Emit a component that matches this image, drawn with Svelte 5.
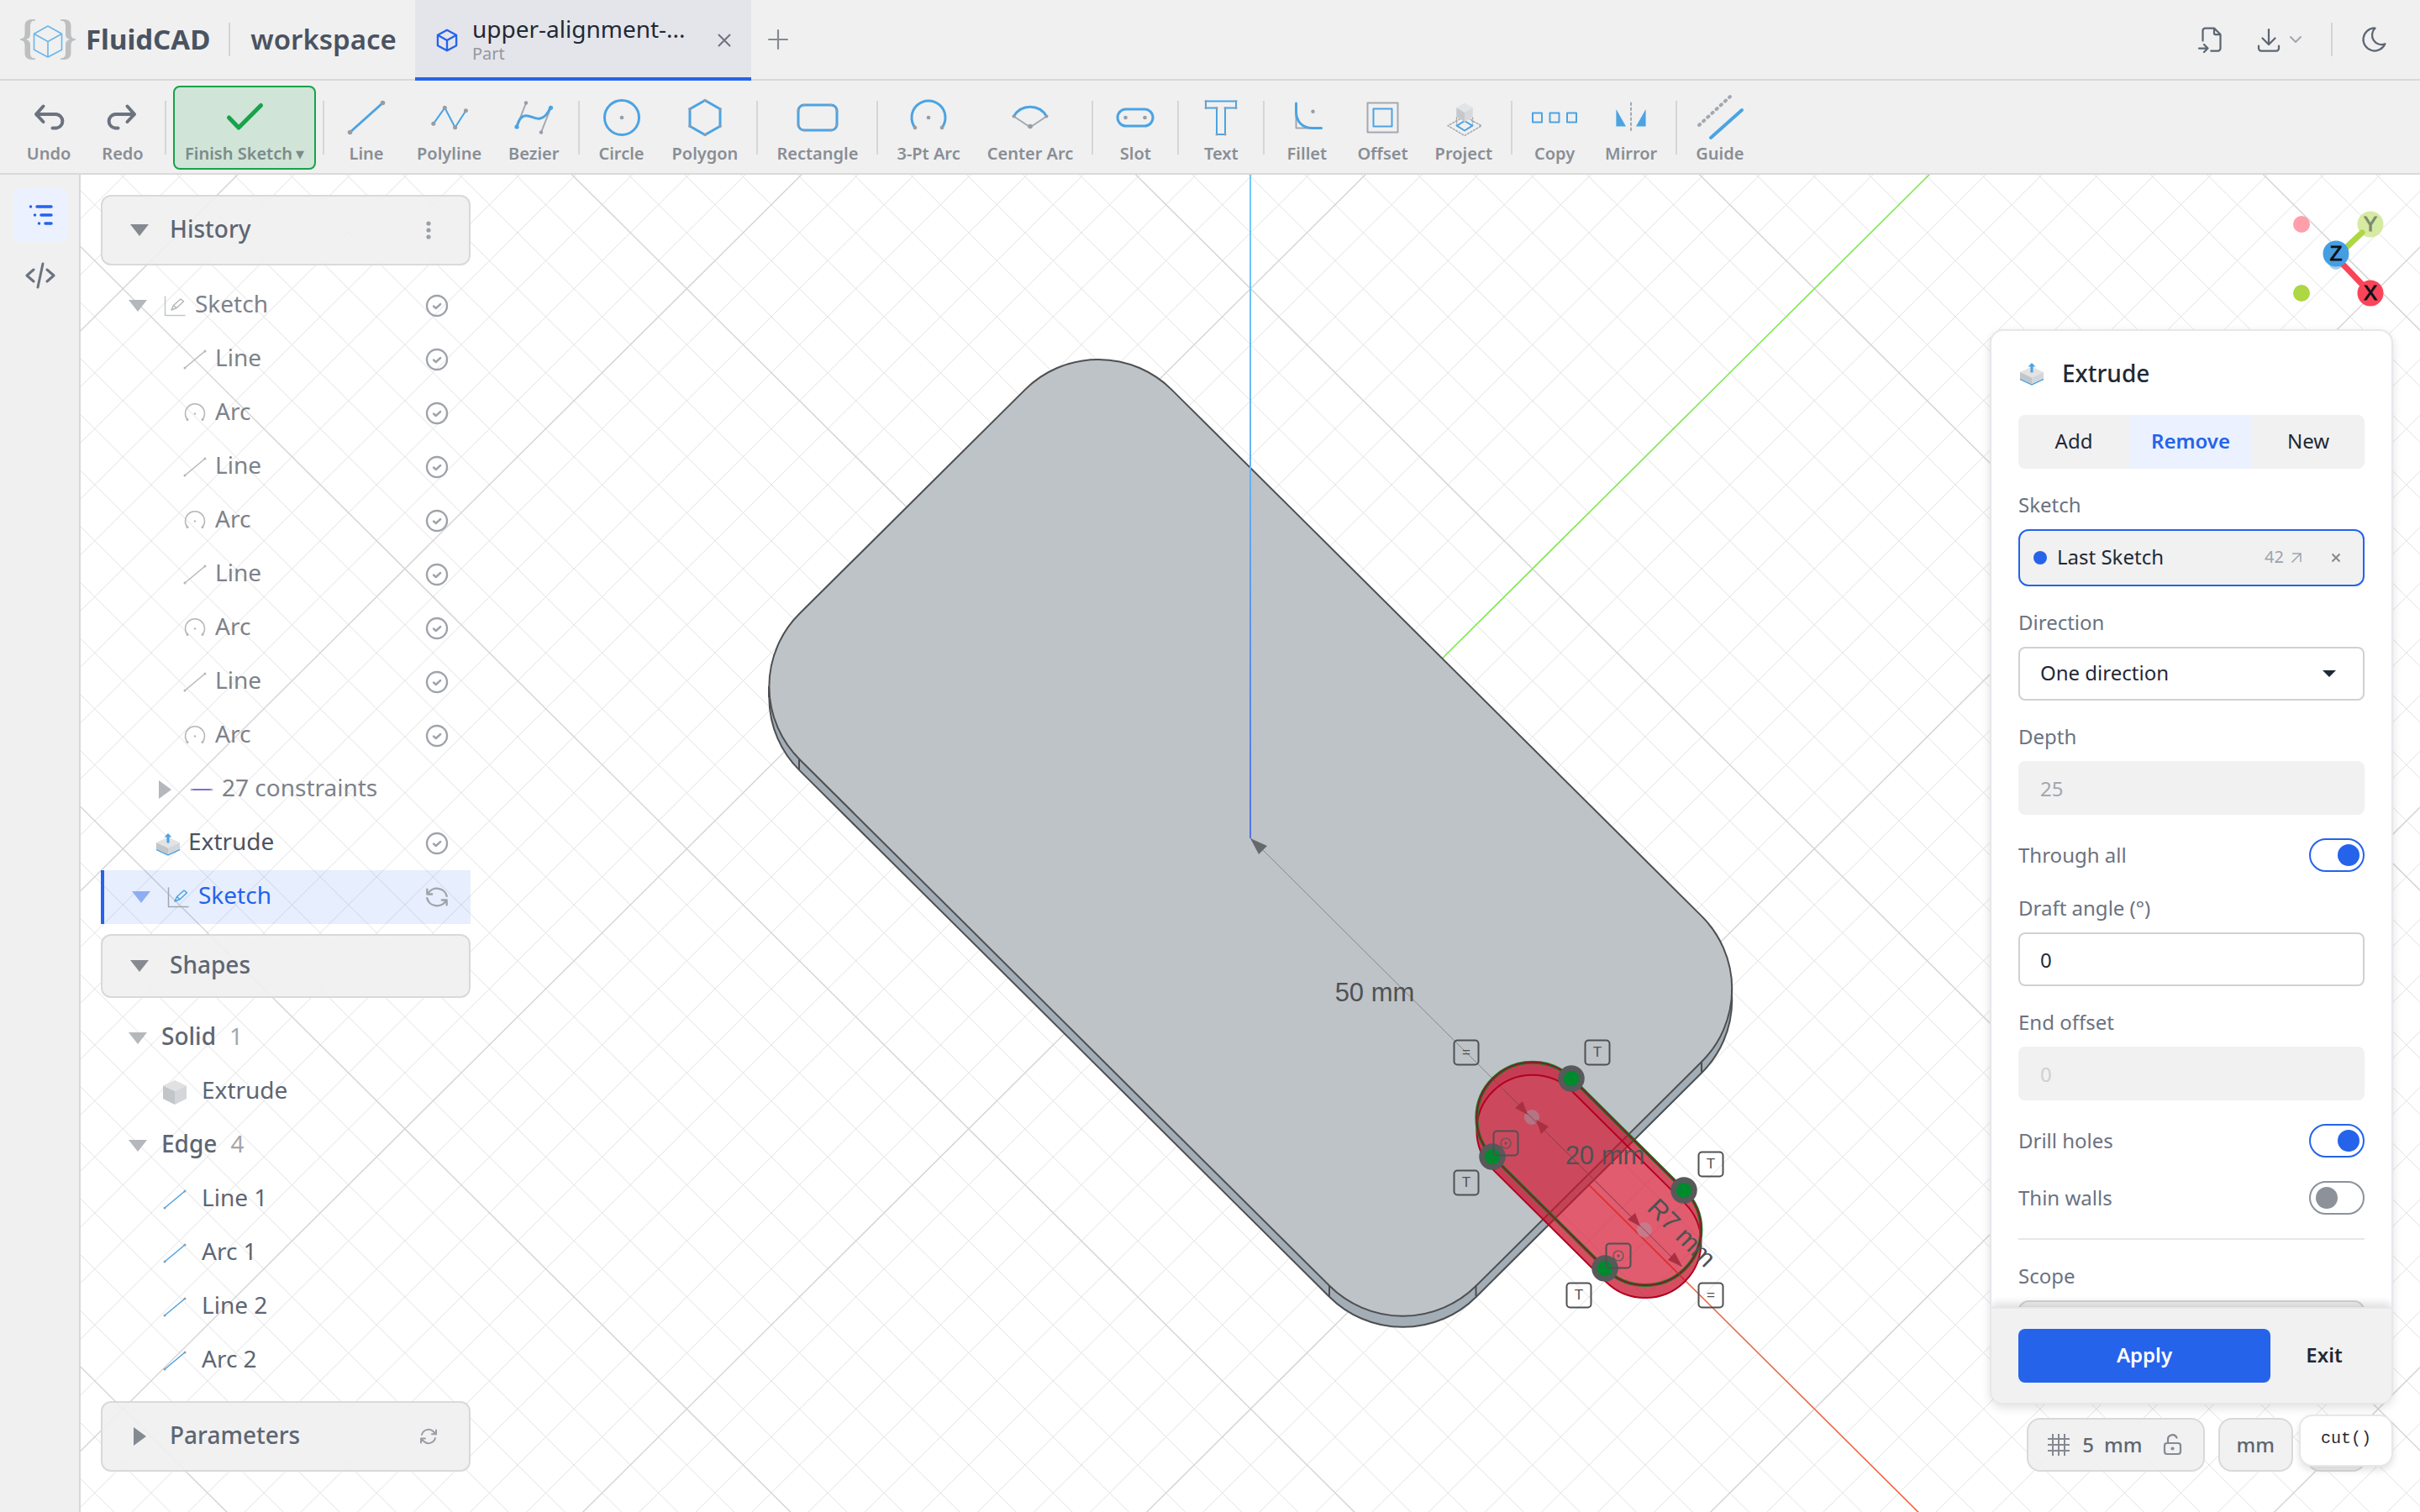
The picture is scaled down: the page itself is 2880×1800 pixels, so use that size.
<script>
  let direction = $state('one');
  let draftAngle = $state('0');
  let throughAll = $state(true);
  let drillHoles = $state(true);
  let thinWalls = $state(false);
  let operation = $state('Remove');

  const operations = ['Add', 'Remove', 'New'];

  const tools = [
    [
      { id: 'undo', label: 'Undo' },
      { id: 'redo', label: 'Redo' }
    ],
    [{ id: 'finish', label: 'Finish Sketch' }],
    [
      { id: 'line', label: 'Line' },
      { id: 'polyline', label: 'Polyline' },
      { id: 'bezier', label: 'Bezier' }
    ],
    [
      { id: 'circle', label: 'Circle' },
      { id: 'polygon', label: 'Polygon' }
    ],
    [{ id: 'rect', label: 'Rectangle' }],
    [
      { id: 'arc3', label: '3-Pt Arc' },
      { id: 'arcc', label: 'Center Arc' }
    ],
    [{ id: 'slot', label: 'Slot' }],
    [{ id: 'text', label: 'Text' }],
    [
      { id: 'fillet', label: 'Fillet' },
      { id: 'offset', label: 'Offset' },
      { id: 'project', label: 'Project' }
    ],
    [
      { id: 'copy', label: 'Copy' },
      { id: 'mirror', label: 'Mirror' }
    ],
    [{ id: 'guide', label: 'Guide' }]
  ];

  const history = [
    { label: 'Sketch', icon: 'sketch', kind: 'root muted', open: true, status: 'ok' },
    { label: 'Line', icon: 'line', kind: 'child muted', status: 'ok' },
    { label: 'Arc', icon: 'arc', kind: 'child muted', status: 'ok' },
    { label: 'Line', icon: 'line', kind: 'child muted', status: 'ok' },
    { label: 'Arc', icon: 'arc', kind: 'child muted', status: 'ok' },
    { label: 'Line', icon: 'line', kind: 'child muted', status: 'ok' },
    { label: 'Arc', icon: 'arc', kind: 'child muted', status: 'ok' },
    { label: 'Line', icon: 'line', kind: 'child muted', status: 'ok' },
    { label: 'Arc', icon: 'arc', kind: 'child muted', status: 'ok' },
    { label: '27 constraints', icon: 'constraint', kind: 'nested muted', open: false },
    { label: 'Extrude', icon: 'extrude', kind: 'nested', status: 'ok' },
    { label: 'Sketch', icon: 'sketch', kind: 'root selected', open: true, status: 'busy' }
  ];

  const shapes = [
    { label: 'Solid', count: 1, items: [{ label: 'Extrude', icon: 'cube' }] },
    {
      label: 'Edge',
      count: 4,
      items: [
        { label: 'Line 1', icon: 'line' },
        { label: 'Arc 1', icon: 'line' },
        { label: 'Line 2', icon: 'line' },
        { label: 'Arc 2', icon: 'line' }
      ]
    }
  ];

  // grid lines every 5 mm, a stronger one every 50 mm
  const gridSteps = Array.from({ length: 101 }, (_, i) => (i - 50) * 5);
  const minor = gridSteps.filter((v) => v % 50 !== 0);
  const major = gridSteps.filter((v) => v % 50 === 0);
  const toPath = (list) => list.map((v) => `M${v} -300V300M-300 ${v}H300`).join('');

  const slotTop = 'M50 7H70A7 7 0 0 0 70 -7H50A7 7 0 0 0 50 7Z';
  const slotBase = 'M51.125 5.875H71.125A7 7 0 0 0 71.125 -8.125H51.125A7 7 0 0 0 51.125 5.875Z';

  const points = [
    [1870, 1284],
    [1776, 1377],
    [2004, 1417],
    [1910, 1510]
  ];

  const badges = [
    { x: 1745, y: 1253, mark: '=' },
    { x: 1901, y: 1253, mark: 'T' },
    { x: 1792, y: 1361, mark: 'o' },
    { x: 2036, y: 1386, mark: 'T' },
    { x: 1745, y: 1408, mark: 'T' },
    { x: 1926, y: 1495, mark: 'o' },
    { x: 1879, y: 1542, mark: 'T' },
    { x: 2036, y: 1542, mark: '=' }
  ];
</script>

{#snippet cubeOutline(cls)}
  <svg class={cls} viewBox="0 0 24 24" fill="none" stroke="currentColor" stroke-width="2" stroke-linejoin="round">
    <path d="M12 1.5l9.5 5.2v10.6L12 22.5l-9.5-5.2V6.7zM2.5 6.7L12 12l9.5-5.3M12 12v10.5" />
  </svg>
{/snippet}

{#snippet caret(open)}
  <svg class="caret" viewBox="0 0 24 24" fill="currentColor">
    {#if open}
      <path d="M1 5h22L12 19z" />
    {:else}
      <path d="M5 1v22L20 12z" />
    {/if}
  </svg>
{/snippet}

{#snippet toolIcon(id)}
  <svg class="tool-icon" viewBox="0 0 48 48" fill="none" stroke-linecap="round" stroke-linejoin="round">
    {#if id === 'undo'}
      <path class="ink" d="M17.5 10.5L9 20l8.500 9M9 20h24a8.300 8.300 0 0 1 0 16.500h-4.500" />
    {:else if id === 'redo'}
      <path class="ink" d="M29.500 10.500L38 20l-8.500 9M38 20H15a8.300 8.300 0 0 0 0 16.500h3.500" />
    {:else if id === 'finish'}
      <path class="tick" d="M5.500 24L17 36 43.500 9.500" />
    {:else if id === 'line'}
      <path class="blue" d="M4.500 41.500l39-35" />
      <circle class="dot" cx="4.500" cy="41.500" r="2.800" /><circle class="dot" cx="43.500" cy="6.500" r="2.800" />
    {:else if id === 'polyline'}
      <path class="blue thin" d="M4.800 31.300l13.500-19 12.300 23.400 12.800-20" />
      <circle class="dot" cx="4.800" cy="31.300" r="2.500" /><circle class="dot" cx="18.300" cy="12.300" r="2.500" />
      <circle class="dot" cx="30.600" cy="35.700" r="2.500" /><circle class="dot" cx="43.400" cy="15.700" r="2.500" />
    {:else if id === 'bezier'}
      <path class="grey" d="M4 35L15 6.500M44.500 12.300L33 41.500" />
      <path class="blue" d="M4 35C7 25 10 21 17 22s9 4 15 3 9-6 12-13" />
      <circle class="dot" cx="15" cy="6.500" r="2.200" /><circle class="dot" cx="33" cy="41.500" r="2.200" />
      <circle class="bdot" cx="4" cy="35" r="2.600" /><circle class="bdot" cx="44.500" cy="12.300" r="2.600" />
    {:else if id === 'circle'}
      <circle class="blue" cx="24" cy="24" r="20.500" /><circle class="dot" cx="24" cy="24" r="2.300" />
    {:else if id === 'polygon'}
      <path class="blue" d="M24 3.500l18 10.200v20.600L24 44.500 6 34.300V13.700z" />
      {#each [[24, 3.5], [42, 13.7], [42, 34.3], [24, 44.5], [6, 34.3], [6, 13.7]] as [x, y]}
        <circle class="dot" cx={x} cy={y} r="1.800" />
      {/each}
    {:else if id === 'rect'}
      <rect class="blue" x="1" y="9" width="46" height="30" rx="7" />
      {#each [[8, 9], [40, 9], [47, 16], [47, 32], [40, 39], [8, 39], [1, 32], [1, 16]] as [x, y]}
        <circle class="dot" cx={x} cy={y} r="1.600" />
      {/each}
    {:else if id === 'arc3'}
      <path class="blue" d="M8 36a20 20 0 1 1 32 0" />
      <circle class="dot" cx="8" cy="36" r="2.300" /><circle class="dot" cx="40" cy="36" r="2.300" />
      <circle class="dot" cx="24" cy="24" r="2.300" />
    {:else if id === 'arcc'}
      <path class="grey" d="M4.500 22.500l19.500 13 19.500-13" />
      <path class="blue" d="M4.500 22.500a22.500 22.500 0 0 1 39 0" />
      <circle class="dot" cx="4.500" cy="22.500" r="2" /><circle class="dot" cx="43.500" cy="22.500" r="2" />
      <circle class="dot" cx="24" cy="34.500" r="2.800" />
    {:else if id === 'slot'}
      <rect class="blue" x="3" y="14" width="42" height="20" rx="10" />
      <circle class="dot" cx="12.500" cy="24" r="2.300" /><circle class="dot" cx="35.500" cy="24" r="2.300" />
    {:else if id === 'text'}
      <path class="blue thin" d="M6 4.500h36v8H29v31.500H19V12.500H6z" />
      {#each [[6, 4.5], [42, 4.5], [42, 12.5], [29, 12.5], [29, 44], [19, 44], [19, 12.5], [6, 12.5]] as [x, y]}
        <circle class="dot" cx={x} cy={y} r="1.500" />
      {/each}
    {:else if id === 'fillet'}
      <path class="grey" d="M11.500 16v20.500H30" />
      <path class="blue" d="M11.500 7v10c0 12 8 19.500 19 19.500h11" />
      <circle class="dot" cx="31.500" cy="16.700" r="2.200" />
    {:else if id === 'offset'}
      <rect class="grey" x="6.500" y="6.500" width="36" height="35" />
      <rect class="blue thin" x="13.500" y="13.500" width="22" height="21" />
    {:else if id === 'project'}
      <path class="grey fine" stroke-dasharray="2 2" d="M25 22.500l20 11.200-20 11.800L5 33.700zM15.500 24v9.500M34.500 24v9.500" />
      <path class="blue thin" d="M25 28l9.300 5.700-9.300 5.800-9.300-5.800z" />
      <path fill="#e3e4e5" d="M25 6.500l9.800 5.500-9.800 6-9.800-6z" />
      <path fill="#c6c9cc" d="M15.200 12l9.800 6v11l-9.800-6z" />
      <path fill="#d7d9dc" d="M34.800 12L25 18v11l9.800-6z" />
    {:else if id === 'copy'}
      <path class="blue thin" d="M-2 18.500H9v11H-2zM18.500 18.500h11v11h-11zM39 18.500h11v11H39z" />
    {:else if id === 'mirror'}
      <path class="grey" stroke-dasharray="2.500 3.500" d="M24 6.500v36" />
      <path fill="#4ba3e3" d="M6.400 14v20.500H18zM41.600 14v20.500H30z" />
    {:else if id === 'guide'}
      <path class="grey wide" stroke-dasharray="1.500 5.500" d="M-1 33L36-1" />
      <path class="blue wide" d="M13 48l37-33" />
    {/if}
  </svg>
{/snippet}

{#snippet treeIcon(id)}
  <svg class="tree-icon" viewBox="0 0 32 32" fill="none" stroke-linecap="round" stroke-linejoin="round">
    {#if id === 'sketch'}
      <path class="grey fine" d="M4.500 5v22.500H28" />
      <path class="blue fine" d="M12 21l2.500-5.500L23 8l3.500 2.800-8.500 8zM14.500 15.500l3.500 3.300M12 21l2-1" />
    {:else if id === 'line'}
      <path class="blue fine" d="M4 26L28 6" />
      <circle class="dot" cx="4" cy="26" r="1.500" /><circle class="dot" cx="28" cy="6" r="1.500" />
    {:else if id === 'arc'}
      <path class="blue fine" d="M7 23.500a11.500 11.500 0 1 1 18 0" />
      <circle class="dot" cx="7" cy="23.500" r="1.500" /><circle class="dot" cx="25" cy="23.500" r="1.500" />
      <circle class="dot" cx="16" cy="16.500" r="1.200" />
    {:else if id === 'constraint'}
      <path stroke="#7c6fd0" stroke-width="2" d="M4 16h24" />
      <circle class="dot" cx="4" cy="16" r="1.500" /><circle class="dot" cx="28" cy="16" r="1.500" />
    {:else if id === 'cube'}
      <path fill="#e0e1e2" d="M16 2l14 6.500L16 15 2 8.500z" />
      <path fill="#c3c6c9" d="M2 8.500L16 15v16L2 24z" />
      <path fill="#d4d6d9" d="M30 8.500L16 15v16l14-7z" />
    {:else if id === 'extrude'}
      <path fill="#4ba3e3" d="M2 22.500l14 6.500 14-6.500v1.800l-14 6.500-14-6.500z" />
      <path fill="#e2e3e4" d="M16 8.500l14 6.500-14 6.500L2 15z" />
      <path fill="#c3c6c9" d="M2 15l14 6.500V29L2 22.500z" />
      <path fill="#d4d6d9" d="M30 15l-14 6.500V29l14-6.500z" />
      <path fill="#4ba3e3" d="M16 4l4.500 4.500h-3v7h-3v-7h-3z" />
    {/if}
  </svg>
{/snippet}

<div class="app">
  <header class="topbar">
    <div class="brand">
      <svg class="logo" viewBox="0 0 66 48" fill="none">
        <path fill="#bdbfc1" d="M18 0h-3C8.500 0 5.500 2.500 5.500 8v9c0 4-1.500 5.800-5.500 6.300v1.400C4 25.200 5.500 27 5.500 31v9c0 5.500 3 8 9.500 8h3v-1.500c-4.500-.3-6-2.300-6-7V31c0-4-1.500-6-5-7 3.500-1 5-3 5-7V8.500c0-4.700 1.500-6.700 6-7zM48 0h3c6.500 0 9.500 2.500 9.500 8v9c0 4 1.500 5.800 5.500 6.300v1.400c-4 .5-5.500 2.300-5.500 6.300v9c0 5.500-3 8-9.500 8h-3v-1.500c4.500-.3 6-2.300 6-7V31c0-4 1.500-6 5-7-3.500-1-5-3-5-7V8.500c0-4.700-1.500-6.700-6-7z" />
        <path stroke="#6cb6e9" stroke-width="1.600" stroke-linejoin="round" d="M33 8l16.500 9.300v19L33 45l-16.500-8.700v-19zM16.500 17.300L33 26.500l16.500-9.200M33 26.500V45" />
      </svg>
      <span class="name">FluidCAD</span>
      <span class="rule"></span>
      <span class="space">workspace</span>
    </div>
    <div class="tab">
      {@render cubeOutline('tab-cube')}
      <div class="tab-text">
        <span class="tab-title">upper-alignment-...</span>
        <span class="tab-kind">Part</span>
      </div>
      <button class="bare" aria-label="Close tab">
        <svg class="tiny" viewBox="0 0 16 16" stroke="currentColor" stroke-width="2" stroke-linecap="round"><path d="M1.500 1.500l13 13M14.500 1.500l-13 13" /></svg>
      </button>
    </div>
    <button class="bare add-tab" aria-label="New tab">
      <svg viewBox="0 0 22 22" stroke="currentColor" stroke-width="2" stroke-linecap="round"><path d="M11 1v20M1 11h20" /></svg>
    </button>
    <div class="actions">
      <button class="bare" aria-label="Import">
        <svg class="tabler" viewBox="0 0 24 24"><path d="M14 3v4a1 1 0 0 0 1 1h4M5 13V5a2 2 0 0 1 2-2h7l5 5v11a2 2 0 0 1-2 2h-5.500M2 19h7m-3-3l3 3-3 3" /></svg>
      </button>
      <button class="bare export" aria-label="Export">
        <svg class="tabler" viewBox="0 0 24 24"><path d="M4 17v2a2 2 0 0 0 2 2h12a2 2 0 0 0 2-2v-2M7 11l5 5 5-5M12 4v12" /></svg>
        <svg class="chev" viewBox="0 0 20 20"><path d="M4 7l6 6 6-6" /></svg>
      </button>
      <span class="rule"></span>
      <button class="bare" aria-label="Dark mode">
        <svg class="tabler" viewBox="0 0 24 24"><path d="M12 3h.393a7.500 7.500 0 0 0 7.920 12.446A9 9 0 1 1 12 2.992z" /></svg>
      </button>
    </div>
  </header>

  <nav class="toolbar" aria-label="Sketch tools">
    {#each tools as group, i}
      {#if i > 0}<span class="sep"></span>{/if}
      {#each group as tool}
        <button class="tool" class:finish={tool.id === 'finish'}>
          {@render toolIcon(tool.id)}
          <span>{tool.label}{#if tool.id === 'finish'}<small>▼</small>{/if}</span>
        </button>
      {/each}
    {/each}
  </nav>

  <div class="body">
    <aside class="rail">
      <button class="rail-btn active" aria-label="Tree">
        <svg viewBox="0 0 32 32" stroke="currentColor" stroke-width="3.500" stroke-linecap="round"><path d="M4.500 6h.01M12 6h17M9.500 16h.01M17 16h12M14.500 26h.01M22 26h7" /></svg>
      </button>
      <button class="rail-btn" aria-label="Code">
        <svg class="code" viewBox="0 0 36 36" fill="none" stroke="currentColor" stroke-width="3" stroke-linecap="round" stroke-linejoin="round"><path d="M10 11l-8 7 8 7M26 11l8 7-8 7M21 4l-6 28" /></svg>
      </button>
    </aside>

    <main class="stage">
      <svg class="scene" viewBox="96 208 2784 1592" preserveAspectRatio="xMidYMid slice" fill="none">
        <defs>
          <linearGradient id="zaxis" gradientUnits="userSpaceOnUse" x1="0" y1="208" x2="0" y2="997">
            <stop offset="0" stop-color="#70cbfb" />
            <stop offset="0.430" stop-color="#66b4f4" />
            <stop offset="0.600" stop-color="#5f9cec" />
            <stop offset="1" stop-color="#4f74ea" />
          </linearGradient>
        </defs>

        <g transform="matrix(6.71 6.668 6.71 -6.668 1488.300 1010.500)">
          <path class="grid-minor" d={toPath(minor)} />
          <path class="grid-major" d={toPath(major)} />
          <path class="axis" stroke="#f2643c" d="M0 0H300" />
          <path class="axis" stroke="#7cee4f" d="M0 0V300" />
        </g>

        <!-- plate, 120 x 66 mm with 13 mm corners -->
        <g transform="matrix(6.71 6.668 6.71 -6.668 1488.300 1010.500)">
          <rect class="side edge" x="-60" y="-33" width="120" height="66" rx="13" />
        </g>
        <path class="side" d="M915 817L2061 1177v13L915 830z" />
        <g transform="matrix(6.71 6.668 6.71 -6.668 1488.300 997.300)">
          <rect class="face edge" x="-60" y="-33" width="120" height="66" rx="13" />
        </g>
        <path stroke="#4d4f51" stroke-width="2" d="M951 904v13M1582 1530v13M1756.500 1530v13M2025 1264v13M915 817v13M2061 1177v13" />
        <path stroke="url(#zaxis)" stroke-width="2" d="M1488 208V998" />

        <path stroke="#85898c" stroke-width="1" d="M1489 998L2001 1508" />
        <path fill="#66696c" d="M1488 998l20 9-10 10z" />

        <g transform="matrix(6.71 6.668 6.71 -6.668 1488.300 997.300)">
          <path fill="#d2132d" fill-opacity="0.690" d={slotTop + slotBase} />
          <path fill="#a00028" fill-opacity="0.160" fill-rule="evenodd" d={slotTop + slotBase} />
          <path class="wire" stroke="#b3001f" stroke-width="2" d={slotBase} />
          <path class="wire" stroke="#12802f" stroke-width="4" d={slotTop} />
          <path class="wire" stroke="#8c1a20" stroke-width="2" d={slotTop} />
        </g>
        <path stroke="#e8332f" stroke-width="1" stroke-opacity="0.600" d="M1892 1411L2005 1523" />
        <circle cx="1823" cy="1330" r="9" fill="#b47484" /><circle cx="1957" cy="1464" r="9" fill="#c67b8b" />
        <path stroke="#8f4350" stroke-width="1" d="M1790 1298L2001 1508" />
        <path fill="#a92f41" d="M1812 1311l-9 8 15 8zM1828 1333l15 8-9 9zM1946 1444l-9 8 15 8zM1993 1491l-8 9 17 8z" />

        {#each points as [x, y]}
          <circle cx={x} cy={y} r="12.500" fill="#008a2e" stroke="#58595a" stroke-width="6.500" />
        {/each}

        {#each badges as b}
          <g transform="translate({b.x} {b.y})">
            <rect class="badge" x="-14.500" y="-14.500" width="29" height="29" rx="4" />
            {#if b.mark === 'o'}
              <circle r="6" stroke="#555759" stroke-width="1.200" /><circle r="1.500" fill="#555759" />
            {:else}
              <text class="mark" y="5">{b.mark}</text>
            {/if}
          </g>
        {/each}

        <text class="measure" x="1636" y="1192">50 mm</text>
        <text class="measure" x="1910" y="1386">20 mm</text>
        <text class="measure" transform="translate(1994 1475) rotate(45)">R7 mm</text>
      </svg>

      <svg class="gizmo" viewBox="0 0 128 128" stroke-width="7" stroke-linecap="round">
        <circle cx="60" cy="68" r="9" fill="#a8cdee" />
        <circle cx="19" cy="23" r="10" fill="#ff9fa9" />
        <circle cx="19" cy="105" r="10" fill="#add743" />
        <circle cx="101" cy="23" r="15.500" fill="#d6eaa1" />
        <path stroke="#add743" d="M91 33L60 62" />
        <path stroke="#fa4459" d="M60 62l41 43" />
        <circle cx="101" cy="105" r="15.500" fill="#fa4459" />
        <circle cx="60" cy="58" r="15.500" fill="#469ee2" />
        <text x="60" y="66">Z</text>
        <text x="101" y="113">X</text>
        <text class="back" x="101" y="31">Y</text>
      </svg>

      <section class="browser">
        <div class="head tall">
          {@render caret(true)}
          <h2>History</h2>
          <button class="bare" aria-label="History menu">
            <svg class="act" viewBox="0 0 32 32" fill="currentColor"><circle cx="16" cy="8" r="2.600" /><circle cx="16" cy="16" r="2.600" /><circle cx="16" cy="24" r="2.600" /></svg>
          </button>
        </div>
        <ul class="tree">
          {#each history as row}
            <li class="row {row.kind}">
              {#if row.open !== undefined}{@render caret(row.open)}{/if}
              {@render treeIcon(row.icon)}
              <span class="row-label">{row.label}</span>
              {#if row.status === 'ok'}
                <svg class="status" viewBox="0 0 28 28" fill="none" stroke="currentColor" stroke-width="2.400" stroke-linecap="round" stroke-linejoin="round"><circle cx="14" cy="14" r="12" /><path d="M10 14.500l2.800 2.500 5.400-5" /></svg>
              {:else if row.status === 'busy'}
                <svg class="status" viewBox="0 0 24 24" fill="none" stroke="currentColor" stroke-width="2" stroke-linecap="round" stroke-linejoin="round"><path d="M22 11A10.200 9.500 0 0 0 2.800 8.500M2 4v5h5M2 13a10.200 9.500 0 0 0 19.200 2.500M22 20v-5h-5" /></svg>
              {/if}
            </li>
          {/each}
        </ul>

        <div class="head shapes">
          {@render caret(true)}
          <h2>Shapes</h2>
        </div>
        <ul class="tree">
          {#each shapes as group}
            <li class="row root group">
              {@render caret(true)}
              <span class="row-label">{group.label}</span>
              <span class="count">{group.count}</span>
            </li>
            {#each group.items as item}
              <li class="row shape">
                {@render treeIcon(item.icon)}
                <span class="row-label">{item.label}</span>
              </li>
            {/each}
          {/each}
        </ul>

        <div class="head tall params">
          {@render caret(false)}
          <h2>Parameters</h2>
          <button class="bare" aria-label="Reset parameters">
            <svg class="act pad" viewBox="0 0 24 24" fill="none" stroke="currentColor" stroke-width="2" stroke-linecap="round" stroke-linejoin="round"><path d="M16 9.300h5M3 19.600v-5h5M3 14.700l3.200 3.100a8.300 8.300 0 0 0 13.800-3.700M4 9.900a8.300 8.300 0 0 1 13.800-3.700L21 9.300M21 4.400v5" /></svg>
          </button>
        </div>
      </section>

      <div class="hud">
        <div class="pill snap">
          <svg class="hash" viewBox="0 0 28 28" fill="none" stroke="#858a92" stroke-width="2"><path d="M7 1v26M14 1v26M21 1v26M1 7h26M1 14h26M1 21h26" /></svg>
          <span>5</span>
          <span class="unit">mm</span>
          <svg class="lock" viewBox="0 0 24 28" fill="none" stroke="#858a92" stroke-width="2.200" stroke-linecap="round"><rect x="2" y="12" width="19" height="13" rx="3" /><path d="M6 12V8a5.500 5.500 0 0 1 10.500-2.500" /><circle cx="11.500" cy="18.500" r="1" fill="#858a92" /></svg>
        </div>
        <div class="pill single"><span>mm</span></div>
        <div class="pill under"></div>
      </div>

      <section class="panel">
        <div class="panel-body">
          <div class="panel-head">
            {@render treeIcon('extrude')}
            <h1>Extrude</h1>
          </div>
          <div class="segmented">
            {#each operations as op}
              <button class:on={operation === op} onclick={() => (operation = op)}>{op}</button>
            {/each}
          </div>
          <div class="field">
            <span class="label">Sketch</span>
            <div class="picker">
              <i></i>
              <span class="picked">Last Sketch</span>
              <span class="line-no">42</span>
              <svg class="goto" viewBox="0 0 14 14" fill="none" stroke="currentColor" stroke-width="1.500"><path d="M2 2h10v10M12 2L1.500 12.500" /></svg>
              <button class="bare clear" aria-label="Clear sketch">
                <svg viewBox="0 0 12 12" fill="none" stroke="currentColor" stroke-width="2"><path d="M1.500 1.500l9 9M10.500 1.500l-9 9" /></svg>
              </button>
            </div>
          </div>
          <div class="field">
            <label class="label" for="direction">Direction</label>
            <div class="select">
              <select id="direction" bind:value={direction}>
                <option value="one">One direction</option>
                <option value="two">Two directions</option>
                <option value="sym">Symmetric</option>
              </select>
              <svg viewBox="0 0 16 8" fill="#1f2937"><path d="M0 0h16L8 8z" /></svg>
            </div>
          </div>
          <div class="field">
            <label class="label" for="depth">Depth</label>
            <input id="depth" type="text" value="25" disabled />
          </div>
          <div class="switch">
            <label class="label" for="through">Through all</label>
            <input id="through" type="checkbox" bind:checked={throughAll} />
          </div>
          <div class="field">
            <label class="label" for="draft">Draft angle (°)</label>
            <input id="draft" type="text" bind:value={draftAngle} />
          </div>
          <div class="field">
            <label class="label" for="end">End offset</label>
            <input id="end" type="text" placeholder="0" disabled />
          </div>
          <div class="switch">
            <label class="label" for="drill">Drill holes</label>
            <input id="drill" type="checkbox" bind:checked={drillHoles} />
          </div>
          <div class="switch">
            <label class="label" for="thin">Thin walls</label>
            <input id="thin" type="checkbox" bind:checked={thinWalls} />
          </div>
          <hr />
          <div class="field">
            <span class="label">Scope</span>
            <div class="picker idle"></div>
          </div>
        </div>
        <footer>
          <button class="apply">Apply</button>
          <button class="exit">Exit</button>
        </footer>
      </section>

      <div class="hint">cut()</div>
    </main>
  </div>
</div>

<style>
  :global(body) {
    background: #ffffff;
  }

  .app {
    display: flex;
    flex-direction: column;
    height: 100vh;
    overflow: hidden;
    font-family: 'Noto Sans', sans-serif;
    font-size: 24px;
    color: #1f2937;
  }

  .app :global(*) {
    box-sizing: border-box;
  }

  button,
  input,
  select {
    font: inherit;
    color: inherit;
    margin: 0;
  }

  svg {
    display: block;
    flex: none;
  }

  .bare {
    display: flex;
    align-items: center;
    padding: 0;
    border: 0;
    background: none;
    color: inherit;
  }

  /* top bar */
  .topbar {
    display: flex;
    align-items: center;
    height: 96px;
    flex: none;
    background: #f0f0f0;
    border-bottom: 2px solid #d9d9d9;
  }

  .brand {
    display: flex;
    align-items: center;
    padding: 0 22px 0 24px;
    font-size: 33px;
    line-height: 48px;
    font-weight: 600;
    color: #4a5361;
  }

  .logo {
    width: 66px;
    height: 48px;
  }

  .name {
    margin-left: 12px;
    font-weight: 700;
  }

  .rule {
    width: 2px;
    height: 40px;
    background: #d4d4d4;
  }

  .brand .rule {
    margin: 0 24px 0 22px;
  }

  .tab {
    display: flex;
    align-items: center;
    align-self: stretch;
    width: 400px;
    margin-bottom: -2px;
    padding: 4px 24px 0;
    background: #e4e5ea;
    border-bottom: 4px solid #2563eb;
  }

  .tab-cube {
    width: 28px;
    height: 28px;
    color: #2563eb;
  }

  .tab-text {
    display: flex;
    flex-direction: column;
    flex: 1;
    margin-left: 16px;
  }

  .tab-title {
    font-size: 28px;
    line-height: 32px;
  }

  .tab-kind {
    font-size: 20px;
    line-height: 28px;
    color: #94989f;
  }

  .tiny {
    width: 16px;
    height: 16px;
    color: #6b7280;
  }

  .add-tab {
    margin-left: 20px;
    color: #858a92;
  }

  .add-tab svg {
    width: 24px;
    height: 24px;
  }

  .actions {
    display: flex;
    align-items: center;
    gap: 32px;
    margin-left: auto;
    padding-right: 36px;
    color: #5d6673;
  }

  .export {
    gap: 4px;
  }

  .tabler {
    width: 36px;
    height: 36px;
    fill: none;
    stroke: currentColor;
    stroke-width: 1.5;
    stroke-linecap: round;
    stroke-linejoin: round;
  }

  .chev {
    width: 20px;
    height: 20px;
    fill: none;
    stroke: #a3a6ad;
    stroke-width: 2;
    stroke-linecap: round;
    stroke-linejoin: round;
  }

  /* toolbar */
  .toolbar {
    display: flex;
    align-items: center;
    gap: 4px;
    flex: none;
    padding: 6px 16px 4px;
    background: #f0f0f0;
    border-bottom: 2px solid #d9d9d9;
  }

  .tool {
    display: flex;
    flex-direction: column;
    align-items: center;
    gap: 6px;
    min-width: 84px;
    height: 100px;
    padding: 12px 12px 4px;
    border: 2px solid transparent;
    border-radius: 8px;
    background: none;
    font-size: 20px;
    line-height: 26px;
    font-weight: 600;
    color: #898e96;
    white-space: nowrap;
  }

  .tool small {
    margin-left: 4px;
    font-family: 'DejaVu Sans', sans-serif;
    font-size: 13px;
    vertical-align: 2px;
  }

  .finish {
    border-color: #16a34a;
    background: #d0e4d8;
    color: #7b8b8a;
  }

  .sep {
    width: 2px;
    height: 64px;
    margin: 0 4px;
    background: #d5d6da;
  }

  .tool-icon {
    width: 48px;
    height: 48px;
    overflow: visible;
  }

  .ink {
    stroke: #6b7280;
    stroke-width: 4;
  }

  .tick {
    stroke: #16a34a;
    stroke-width: 5;
  }

  .blue {
    stroke: #4ba3e3;
    stroke-width: 3;
  }

  .grey {
    stroke: #a3a8b0;
    stroke-width: 2;
  }

  .thin {
    stroke-width: 2;
  }

  .fine {
    stroke-width: 1.5;
  }

  .wide {
    stroke-width: 4;
  }

  .dot {
    fill: #979ca5;
  }

  .bdot {
    fill: #4ba3e3;
  }

  /* body */
  .body {
    display: flex;
    flex: 1;
    min-height: 0;
  }

  .rail {
    display: flex;
    flex-direction: column;
    gap: 8px;
    width: 96px;
    flex: none;
    padding: 16px 14px 16px 16px;
    background: #f0f0f0;
    border-right: 2px solid #d9d9d9;
  }

  .rail-btn {
    display: flex;
    align-items: center;
    justify-content: center;
    width: 64px;
    height: 64px;
    border: 0;
    border-radius: 8px;
    background: none;
    color: #6b7280;
  }

  .rail-btn.active {
    background: #ebf1fe;
    color: #2563eb;
  }

  .rail-btn svg {
    width: 32px;
    height: 32px;
  }

  .rail-btn .code {
    width: 36px;
    height: 36px;
  }

  .stage {
    position: relative;
    flex: 1;
    min-width: 0;
    overflow: hidden;
    background: #ffffff;
  }

  .scene {
    position: absolute;
    inset: 0;
    width: 100%;
    height: 100%;
  }

  .scene :is(path, rect) {
    vector-effect: non-scaling-stroke;
  }

  .grid-minor {
    stroke: #e2e2e4;
    stroke-width: 1;
  }

  .grid-major {
    stroke: #d6d6d7;
    stroke-width: 1.5;
  }

  .axis {
    stroke-width: 1.5;
  }

  .side {
    fill: #a3adb6;
  }

  .face {
    fill: #bec3c7;
  }

  .edge {
    stroke: #4d4f51;
    stroke-width: 2;
  }

  .badge {
    stroke: #4f5153;
    stroke-width: 2;
  }

  .mark,
  .measure,
  .gizmo text {
    font-family: 'Liberation Sans', sans-serif;
    text-anchor: middle;
  }

  .mark {
    font-size: 17px;
    fill: #4f5153;
  }

  .measure {
    font-size: 31px;
    fill: #4f5153;
  }

  .gizmo {
    position: absolute;
    top: 36px;
    right: 32px;
    width: 128px;
    height: 128px;
  }

  .gizmo text {
    font-size: 24px;
    fill: #0b1018;
    stroke: #0b1018;
    stroke-width: 1;
  }

  .gizmo .back {
    fill: #7d8a70;
    stroke: #7d8a70;
  }

  /* model browser */
  .browser {
    position: relative;
    width: 440px;
    margin: 24px;
    color: #5d6673;
    font-size: 28px;
    line-height: 40px;
  }

  .head {
    display: flex;
    align-items: center;
    gap: 24px;
    height: 76px;
    padding: 0 32px;
    border: 2px solid #d9d9d9;
    border-radius: 12px;
    background: rgba(239, 239, 239, 0.9);
    color: #858a91;
  }

  .head.tall {
    height: 84px;
  }

  .head h2 {
    flex: 1;
    margin: 0;
    padding-bottom: 4px;
    font-size: 28px;
    font-weight: 500;
    color: #5d6673;
  }

  .head.shapes {
    margin-top: 12px;
  }

  .caret {
    width: 24px;
    height: 24px;
  }

  .act {
    width: 32px;
    height: 32px;
    color: #9a9ea5;
  }

  .act.pad {
    padding: 4px;
  }

  .tree {
    list-style: none;
    margin: 16px 0 0;
    padding: 0;
  }

  .params {
    margin-top: 16px;
  }

  .row {
    display: flex;
    align-items: center;
    height: 64px;
    padding-right: 26px;
  }

  .row .caret {
    margin-right: 16px;
    color: #b4b7bc;
  }

  .row .row-label {
    margin-left: 8px;
    padding-bottom: 6px;
  }

  .row.root {
    padding-left: 32px;
  }

  .row.nested {
    padding-left: 64px;
    color: #4a5361;
  }

  .row.child {
    padding-left: 96px;
  }

  .row.muted {
    color: #7d828b;
  }

  .row.muted .blue {
    stroke: #b5b8bc;
  }

  .row.muted .grey {
    stroke: #c3c6ca;
  }

  .row.muted .dot {
    fill: #b5b8bc;
  }

  .row.selected {
    border-left: 4px solid #2563eb;
    background: rgba(37, 99, 235, 0.11);
    color: #2563eb;
  }

  .row.selected .caret {
    color: #8eaef4;
  }

  .row.group {
    font-weight: 500;
  }

  .row.group .row-label {
    margin-left: 0;
  }

  .count {
    margin-left: 16px;
    padding-bottom: 6px;
    font-weight: 400;
    color: #a3a6ab;
  }

  .row.shape {
    padding-left: 72px;
  }

  .row.shape .row-label {
    margin-left: 16px;
  }

  .tree-icon {
    width: 32px;
    height: 32px;
  }

  .status {
    width: 28px;
    height: 28px;
    margin-left: auto;
    color: #9fa3aa;
  }

  /* bottom pills */
  .hud {
    position: absolute;
    right: 64px;
    bottom: 48px;
    display: flex;
    gap: 16px;
    font-weight: 500;
    color: #5d6673;
  }

  .pill {
    display: flex;
    align-items: center;
    height: 64px;
    padding: 0 24px;
    border: 2px solid #d9d9d9;
    border-radius: 16px;
    background: rgba(239, 239, 239, 0.9);
  }

  .pill span {
    padding-bottom: 2px;
  }

  .pill.snap {
    padding-left: 22px;
  }

  .pill.single {
    padding: 0 20px;
  }

  .pill.under {
    width: 71px;
  }

  .hash {
    width: 28px;
    height: 28px;
    margin-right: 14px;
  }

  .unit {
    margin-left: 12px;
  }

  .lock {
    width: 24px;
    height: 28px;
    margin-left: 24px;
  }

  .hint {
    position: absolute;
    right: 32px;
    bottom: 54px;
    width: 112px;
    height: 62px;
    padding-bottom: 4px;
    border: 2px solid #e5e7eb;
    border-radius: 16px;
    background: #ffffff;
    box-shadow: 0 4px 8px rgba(0, 0, 0, 0.12);
    font-family: 'Liberation Mono', monospace;
    font-size: 20px;
    line-height: 54px;
    text-align: center;
  }

  /* feature panel */
  .panel {
    position: absolute;
    top: 184px;
    right: 32px;
    bottom: 128px;
    display: flex;
    flex-direction: column;
    width: 480px;
    overflow: hidden;
    border: 2px solid #e5e7eb;
    border-radius: 16px;
    background: #ffffff;
    box-shadow: 0 4px 12px rgba(0, 0, 0, 0.12);
  }

  .panel-body {
    display: flex;
    flex-direction: column;
    gap: 28px;
    flex: 1;
    min-height: 0;
    overflow: hidden;
    padding: 24px 32px 0;
  }

  .panel-body > * {
    flex: none;
  }

  .panel-head {
    display: flex;
    align-items: center;
    gap: 20px;
    height: 48px;
    padding-top: 4px;
    line-height: 44px;
  }

  .panel-head h1 {
    margin: 0;
    font-size: 28px;
    font-weight: 500;
  }

  .segmented {
    display: grid;
    grid-template-columns: 132fr 146fr 134fr;
    height: 64px;
    border-radius: 8px;
    overflow: hidden;
    background: #f1f1f1;
  }

  .segmented button {
    padding: 0 0 4px;
    border: 0;
    background: none;
  }

  .segmented .on {
    background: #ebf1fe;
    color: #2563eb;
    font-weight: 600;
  }

  .field {
    display: flex;
    flex-direction: column;
    gap: 14px;
  }

  .label {
    line-height: 30px;
    color: #6b7280;
  }

  .picker {
    display: flex;
    align-items: center;
    height: 68px;
    padding: 0 26px 0 16px;
    border: 2px solid #2563eb;
    border-radius: 12px;
    background: #f1f1f1;
  }

  .picker.idle {
    border-color: #d4d4d4;
  }

  .picker i {
    width: 16px;
    height: 16px;
    margin-right: 12px;
    border-radius: 50%;
    background: #2563eb;
  }

  .picker span {
    padding-bottom: 4px;
  }

  .picked {
    flex: 1;
  }

  .line-no {
    font-size: 20px;
    color: #9ca3af;
  }

  .goto {
    width: 14px;
    height: 14px;
    margin: 0 34px 0 8px;
    color: #9ca3af;
  }

  .clear {
    color: #858a92;
  }

  .clear svg {
    width: 12px;
    height: 12px;
  }

  .field input,
  select {
    width: 100%;
    height: 64px;
    padding: 0 24px;
    border: 2px solid #d1d1d1;
    border-radius: 8px;
    background: #ffffff;
  }

  .field input:disabled {
    border-color: #f1f1f1;
    background: #f1f1f1;
    color: #a3a7ae;
  }

  .field input::placeholder {
    color: #cfcfd1;
  }

  .select {
    display: grid;
    align-items: center;
  }

  .select select,
  .select svg {
    grid-area: 1 / 1;
  }

  .select select {
    appearance: none;
    padding-bottom: 4px;
  }

  .select svg {
    justify-self: end;
    width: 16px;
    height: 8px;
    margin-right: 34px;
    pointer-events: none;
  }

  .switch {
    display: flex;
    align-items: center;
    justify-content: space-between;
    height: 40px;
  }

  .switch input {
    appearance: none;
    display: flex;
    align-items: center;
    width: 66px;
    height: 40px;
    padding: 0 6px;
    border: 2px solid #8d929a;
    border-radius: 20px;
    background: #ffffff;
  }

  .switch input::before {
    content: '';
    width: 26px;
    height: 26px;
    border-radius: 50%;
    background: #8d929a;
  }

  .switch input:checked {
    justify-content: flex-end;
    padding: 0 4px;
    border-color: #2563eb;
  }

  .switch input:checked::before {
    background: #2563eb;
  }

  hr {
    width: 100%;
    height: 2px;
    margin: 0;
    border: 0;
    background: #e5e7eb;
  }

  footer {
    display: flex;
    flex: none;
    padding: 24px 32px;
    border-top: 2px solid #e5e7eb;
    background: #f1f1f1;
    box-shadow: 0 -4px 10px rgba(0, 0, 0, 0.14);
  }

  footer button {
    height: 64px;
    padding: 0 0 4px;
    border: 0;
    border-radius: 8px;
    font-weight: 600;
  }

  .apply {
    flex: 1;
    background: #2563eb;
    color: #ffffff;
  }

  .exit {
    width: 112px;
    padding-left: 16px;
    background: none;
  }
</style>
